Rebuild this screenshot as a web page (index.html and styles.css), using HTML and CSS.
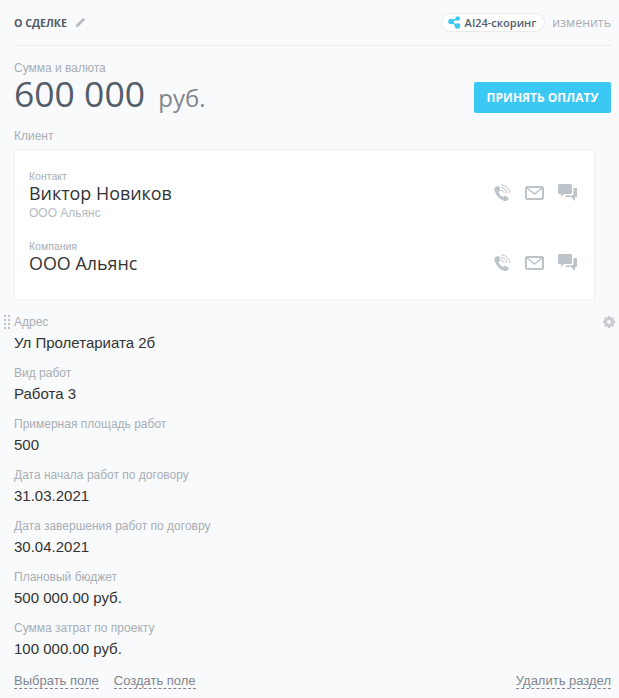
FILE: index.html
```html
<!DOCTYPE html>
<html lang="ru">
<head>
  <meta charset="UTF-8">
  <meta name="viewport" content="width=device-width, initial-scale=1.0">
  <title>О сделке</title>
  <link rel="stylesheet" href="styles.css">
</head>
<body>

  <div class="header">
    <span class="header-title">О СДЕЛКЕ</span>
    <svg class="icon-pencil" width="11" height="11" viewBox="0 0 12 12"><path d="M9 .8l2.2 2.2-7.4 7.4L.8 11.2l.8-3z" fill="#b9bdc3"/></svg>
    <span class="scoring">
      <svg width="13" height="13" viewBox="0 0 13 13"><path d="M3 5.5L9.5 2.5M3 5.5L9.5 10.5" stroke="#3bc8f5" stroke-width="1.5"/><circle cx="3" cy="5.5" r="2.8" fill="#3bc8f5"/><circle cx="9.8" cy="2.5" r="2.2" fill="#3bc8f5"/><circle cx="9.5" cy="10" r="2.8" fill="#3bc8f5"/></svg>
      AI24-скоринг
    </span>
    <span class="header-edit">изменить</span>
  </div>

  <div class="sum">
    <div>
      <div class="label">Сумма и валюта</div>
      <div class="sum-value">600 000 <span class="sum-currency">руб.</span></div>
    </div>
    <button class="pay-btn">ПРИНЯТЬ ОПЛАТУ</button>
  </div>

  <div class="label client-label">Клиент</div>
  <div class="client-card">
    <div class="client-row">
      <div class="client-info">
        <div class="client-role">Контакт</div>
        <div class="client-name">Виктор Новиков</div>
        <div class="client-sub">ООО Альянс</div>
      </div>
      <div class="client-icons">
        <svg width="18" height="18" viewBox="0 0 18 18"><path d="M3 2.500L6 2l1.500 4.500L5.500 8c.5 2 2.500 4 4.500 5l2-1.500 3.800 2.500-.8 2c-1 1-2.500 1.300-4 .8C6 15 2.500 10.500 1.500 6 1.200 4.500 2 3 3 2.500z" fill="#bcc3c9"/><path d="M8 .8c4.500.2 8.500 3.700 9 8.200M8 3.500c3 .2 5.500 2.500 6 5.500M8 6.200c1.500.2 3 1.300 3.300 2.800" fill="none" stroke="#bcc3c9"/></svg>
        <svg width="19" height="14" viewBox="0 0 19 14"><rect x="1" y="1" width="17" height="12" rx="1.500" fill="none" stroke="#bcc3c9" stroke-width="2"/><path d="M2 2l7.500 6L17 2" fill="none" stroke="#bcc3c9" stroke-width="1.600"/></svg>
        <svg width="19" height="18" viewBox="0 0 19 18"><path d="M1.500 0h11C13.300 0 14 .7 14 1.500v7c0 .8-.7 1.500-1.500 1.500H6l-3 2.500V10H1.500C.7 10 0 9.300 0 8.500v-7C0 .7.700 0 1.500 0z" fill="#bcc3c9"/><path d="M15.500 4H18c.6 0 1 .4 1 1v7c0 .6-.4 1-1 1h-1v4l-4-4H8l-1-1.500h6.500c1.100 0 2-.9 2-2z" fill="#bcc3c9"/></svg>
      </div>
    </div>
    <div class="client-row">
      <div class="client-info">
        <div class="client-role">Компания</div>
        <div class="client-name">ООО Альянс</div>
      </div>
      <div class="client-icons">
        <svg width="18" height="18" viewBox="0 0 18 18"><path d="M3 2.500L6 2l1.500 4.500L5.500 8c.5 2 2.500 4 4.500 5l2-1.500 3.800 2.500-.8 2c-1 1-2.500 1.300-4 .8C6 15 2.500 10.500 1.500 6 1.200 4.500 2 3 3 2.500z" fill="#bcc3c9"/><path d="M8 .8c4.500.2 8.500 3.700 9 8.200M8 3.500c3 .2 5.500 2.500 6 5.500M8 6.200c1.500.2 3 1.300 3.300 2.800" fill="none" stroke="#bcc3c9"/></svg>
        <svg width="19" height="14" viewBox="0 0 19 14"><rect x="1" y="1" width="17" height="12" rx="1.500" fill="none" stroke="#bcc3c9" stroke-width="2"/><path d="M2 2l7.500 6L17 2" fill="none" stroke="#bcc3c9" stroke-width="1.600"/></svg>
        <svg width="19" height="18" viewBox="0 0 19 18"><path d="M1.500 0h11C13.300 0 14 .7 14 1.500v7c0 .8-.7 1.500-1.500 1.500H6l-3 2.500V10H1.500C.7 10 0 9.300 0 8.500v-7C0 .7.700 0 1.500 0z" fill="#bcc3c9"/><path d="M15.500 4H18c.6 0 1 .4 1 1v7c0 .6-.4 1-1 1h-1v4l-4-4H8l-1-1.500h6.500c1.100 0 2-.9 2-2z" fill="#bcc3c9"/></svg>
      </div>
    </div>
  </div>

  <div class="fields">
    <span class="drag-handle"></span>
    <svg class="icon-gear" width="12" height="12" viewBox="0 0 12 12"><path fill-rule="evenodd" d="M4.800 0h2.400l.3 1.600 1 .4L9.900 1l1.100 1.100-1 1.400.4 1 1.600.3v2.400l-1.600.3-.4 1 1 1.400L9.900 11l-1.400-1-1 .4-.3 1.600H4.800l-.3-1.600-1-.4-1.400 1L1 9.900l1-1.400-.4-1L0 7.200V4.800l1.600-.3.4-1-1-1.400L2.100 1l1.400 1 1-.4zM6 4a2 2 0 100 4 2 2 0 000-4z" fill="#c6cacf"/></svg>
    <div class="field"><div class="label">Адрес</div><div class="field-value">Ул Пролетариата 2б</div></div>
    <div class="field"><div class="label">Вид работ</div><div class="field-value">Работа 3</div></div>
    <div class="field"><div class="label">Примерная площадь работ</div><div class="field-value">500</div></div>
    <div class="field"><div class="label">Дата начала работ по договору</div><div class="field-value">31.03.2021</div></div>
    <div class="field"><div class="label">Дата завершения работ по договру</div><div class="field-value">30.04.2021</div></div>
    <div class="field"><div class="label">Плановый бюджет</div><div class="field-value">500 000.00 руб.</div></div>
    <div class="field"><div class="label">Сумма затрат по проекту</div><div class="field-value">100 000.00 руб.</div></div>
  </div>

  <div class="footer">
    <a class="footer-link">Выбрать поле</a>
    <a class="footer-link">Создать поле</a>
    <a class="footer-link footer-delete">Удалить раздел</a>
  </div>

</body>
</html>
```

FILE: styles.css
```css
* {
  box-sizing: border-box;
}
html, body {
  height: 100%;
}
body {
  margin: 0;
  padding: 0 8px 0 14px;
  background-color: #f9fafb;
  color: #333;
  font-family: 'Liberation Sans', Arial, sans-serif;
  overflow: hidden;
}

.header {
  display: flex;
  align-items: center;
  height: 46px;
  border-bottom: 1px solid #e8eaec;
}
.header-title {
  font-family: 'Open Sans', sans-serif;
  font-size: 10.6px;
  font-weight: 700;
  color: #535c69;
}
.icon-pencil {
  margin-left: 8px;
}
.scoring {
  display: flex;
  align-items: center;
  gap: 4px;
  height: 19px;
  margin-left: auto;
  padding: 0 8px 0 6px;
  background-color: #fff;
  border: 1px solid #e8eaec;
  border-radius: 10px;
  font-family: 'Open Sans', sans-serif;
  font-size: 11px;
  font-weight: 600;
  color: #535c69;
}
.header-edit {
  margin-left: 7px;
  font-family: 'Open Sans', sans-serif;
  font-size: 12.4px;
  color: #a8adb4;
}

.label {
  font-size: 12px;
  line-height: 14px;
  color: #a8aeb5;
}

.sum {
  display: flex;
  justify-content: space-between;
  align-items: flex-end;
  padding-top: 15px;
}
.sum-value {
  margin: 1px 0;
  font-family: 'Open Sans', sans-serif;
  font-size: 35.5px;
  line-height: 35px;
  color: #535c69;
}
.sum-currency {
  margin-left: 4px;
  font-size: 24px;
  color: #80868e;
}
.pay-btn {
  width: 137px;
  height: 31px;
  margin-bottom: 3px;
  padding: 0;
  background-color: #3bc8f5;
  border: 0;
  border-radius: 2px;
  color: #fff;
  font-family: 'Open Sans', sans-serif;
  font-size: 12px;
  font-weight: 700;
}

.client-label {
  margin-top: 13px;
}
.client-card {
  width: 581px;
  height: 151px;
  margin-top: 6px;
  padding: 20px 14px 0;
  background-color: #fff;
  border: 1px solid #eef0f2;
}
.client-row {
  display: flex;
  justify-content: space-between;
  align-items: flex-start;
  margin-bottom: 18px;
}
.client-role {
  font-size: 10.5px;
  line-height: 12px;
  color: #a8aeb5;
}
.client-name {
  margin-bottom: 1px;
  font-family: 'Open Sans', sans-serif;
  font-size: 17.9px;
  line-height: 22px;
  color: #333;
}
.client-sub {
  font-family: 'Liberation Sans', sans-serif;
  font-size: 12px;
  line-height: 17px;
  color: #b5bac0;
}
.client-icons {
  display: flex;
  align-items: center;
  gap: 14px;
  margin-top: 14px;
  padding-right: 3px;
}

.fields {
  position: relative;
  padding-top: 15px;
}
.drag-handle {
  position: absolute;
  left: -11px;
  top: 14px;
  width: 8px;
  height: 16px;
  background-image: radial-gradient(circle, #bcc1c7 1.2px, transparent 1.400px);
  background-size: 4px 4px;
}
.icon-gear {
  position: absolute;
  right: -4px;
  top: 16px;
}
.field {
  height: 51px;
}
.field-value {
  margin-top: 5px;
  font-size: 15px;
  line-height: 18px;
  color: #333;
}

.footer {
  display: flex;
  gap: 15px;
  margin-top: 1px;
}
.footer-link {
  border-bottom: 1px dashed #80868e;
  font-size: 13px;
  line-height: 15px;
  color: #80868e;
}
.footer-delete {
  margin-left: auto;
}
```
